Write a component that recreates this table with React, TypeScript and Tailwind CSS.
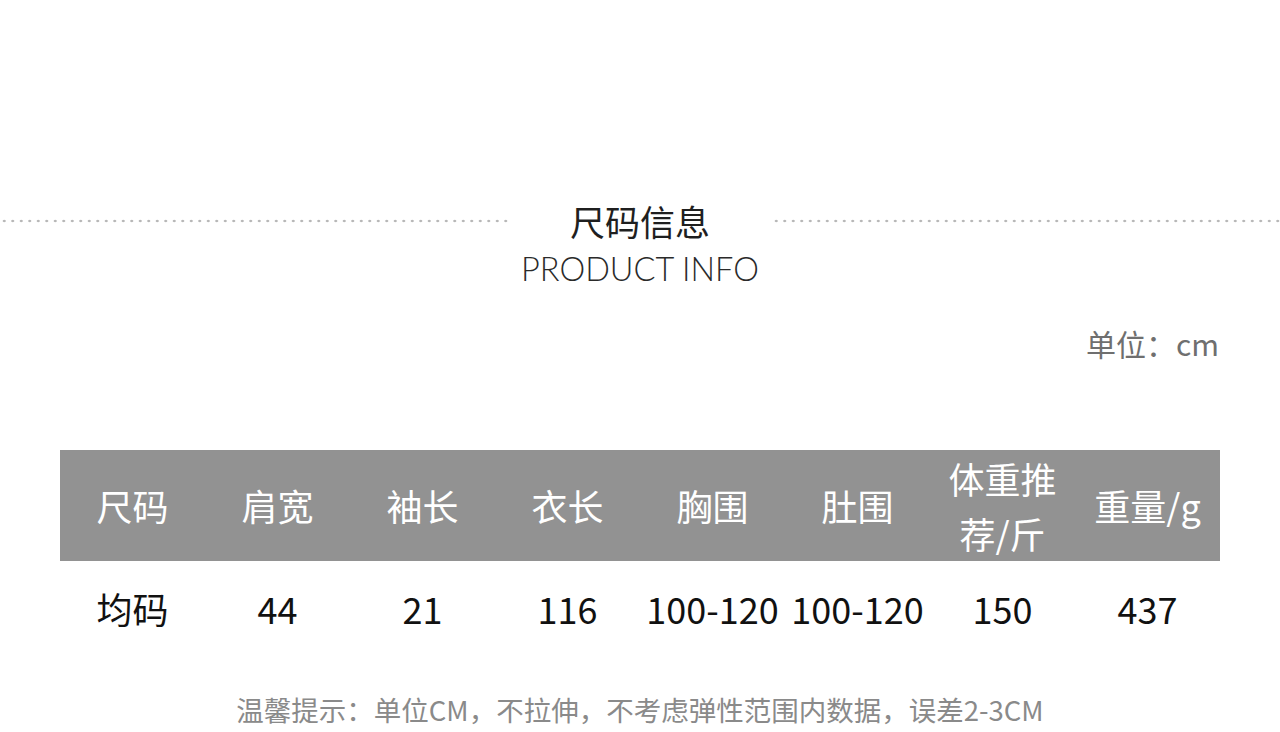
import React from "react";

const cjk = "font-['Noto_Sans_CJK_SC','Noto_Sans',sans-serif]";

const headers = ["尺码", "肩宽", "袖长", "衣长", "胸围", "肚围", "体重推荐/斤", "重量/g"];
const values = ["均码", "44", "21", "116", "100-120", "100-120", "150", "437"];

const DottedLine = () => (
  <div className="h-[4px] flex-1 bg-[radial-gradient(circle,#b5b5b5_1px,transparent_1.6px)] bg-[length:8.5px_4px] bg-repeat-x" />
);

const App = () => {
  return (
    <div className={`w-[1280px] h-[732px] bg-white overflow-hidden pt-[201px] ${cjk}`}>
      <div className="flex items-center">
        <DottedLine />
        <span className="px-[62px] text-[35px] leading-[40px] text-[#1f1f1f]">尺码信息</span>
        <DottedLine />
      </div>
      <div className="mt-[11px] text-center text-[32.5px] leading-[34px] text-[#2a2a2a] font-light font-['Lato',sans-serif]">
        PRODUCT INFO
      </div>

      <div className="px-[60px]">
        <div className="mt-[42px] text-right text-[30px] leading-[30px] text-[#6f6f6f] pr-[1px]">单位：cm</div>

        <div className="mt-[92px] grid grid-cols-8 h-[111px] bg-[#929292] text-white">
          {headers.map((h) => (
            <div key={h} className="flex items-center justify-center text-center px-[16px] text-[36px] leading-[55px]">
              {h}
            </div>
          ))}
        </div>
        <div className="grid grid-cols-8 h-[94px] text-[#111]">
          {values.map((v, i) => (
            <div key={i} className="flex items-center justify-center text-[36px] leading-[40px] whitespace-nowrap">
              {v}
            </div>
          ))}
        </div>
      </div>

      <div className="mt-[39px] text-center text-[27.5px] leading-[30px] text-[#8a8a8a]">
        温馨提示：单位CM，不拉伸，不考虑弹性范围内数据，误差2-3CM
      </div>
    </div>
  );
};

export default App;
